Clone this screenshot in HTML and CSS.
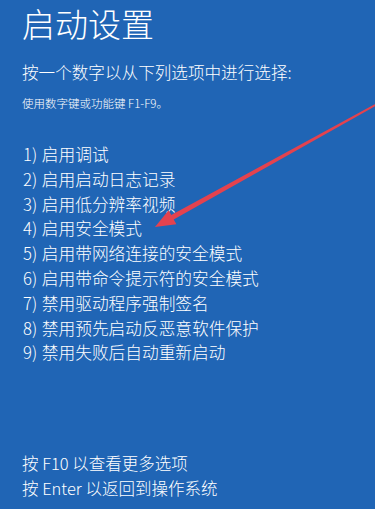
FILE: index.html
```html
<!DOCTYPE html>
<html lang="zh-CN">
<head>
<meta charset="utf-8">
<title>启动设置</title>
<link rel="stylesheet" href="styles.css">
</head>
<body>
<main class="screen">
  <h1 class="title">启动设置</h1>
  <p class="subtitle">按一个数字以从下列选项中进行选择:</p>
  <p class="hint">使用数字键或功能键 F1-F9。</p>
  <ol class="options">
    <li>1) 启用调试</li>
    <li>2) 启用启动日志记录</li>
    <li>3) 启用低分辨率视频</li>
    <li>4) 启用安全模式</li>
    <li>5) 启用带网络连接的安全模式</li>
    <li>6) 启用带命令提示符的安全模式</li>
    <li>7) 禁用驱动程序强制签名</li>
    <li>8) 禁用预先启动反恶意软件保护</li>
    <li>9) 禁用失败后自动重新启动</li>
  </ol>
  <div class="footer">
    <p>按 F10 以查看更多选项</p>
    <p>按 Enter 以返回到操作系统</p>
  </div>
  <svg class="arrow" width="375" height="509" viewBox="0 0 375 509" aria-hidden="true">
    <polygon points="155,227 176.4,224.3 173.7,219.5 375.6,105.8 374.6,104.2 171.3,215.1 168.6,210.3" fill="#e4424e"/>
  </svg>
</main>
</body>
</html>
```
FILE: styles.css
```css
html, body {
  margin: 0;
  padding: 0;
  background: #2065b5;
}
body {
  width: 375px;
  height: 509px;
  overflow: hidden;
  color: #ffffff;
  font-family: "Noto Sans CJK SC", "Noto Sans", sans-serif;
}
.screen {
  position: relative;
  width: 375px;
  height: 509px;
  padding: 3px 0 0 22px;
  box-sizing: border-box;
  display: flex;
  flex-direction: column;
}
.title {
  margin: 0;
  font-size: 33px;
  line-height: 40px;
  font-weight: 300;
  letter-spacing: 0;
}
.subtitle {
  margin: 17px 0 0;
  font-size: 16.6px;
  line-height: 24px;
  font-weight: 300;
}
.hint {
  margin: 10px 0 0;
  font-size: 11.5px;
  line-height: 18px;
  font-weight: 300;
}
.options {
  list-style: none;
  margin: 30px 0 0;
  padding: 0 0 0 1px;
  font-size: 16.7px;
  line-height: 24.8px;
  font-weight: 300;
  word-spacing: 1px;
}
.footer {
  margin-top: auto;
  margin-bottom: 8px;
  font-size: 16.5px;
  line-height: 25px;
  font-weight: 300;
}
.footer p {
  margin: 0;
}
.arrow {
  position: absolute;
  left: 0;
  top: 0;
  pointer-events: none;
}
```
